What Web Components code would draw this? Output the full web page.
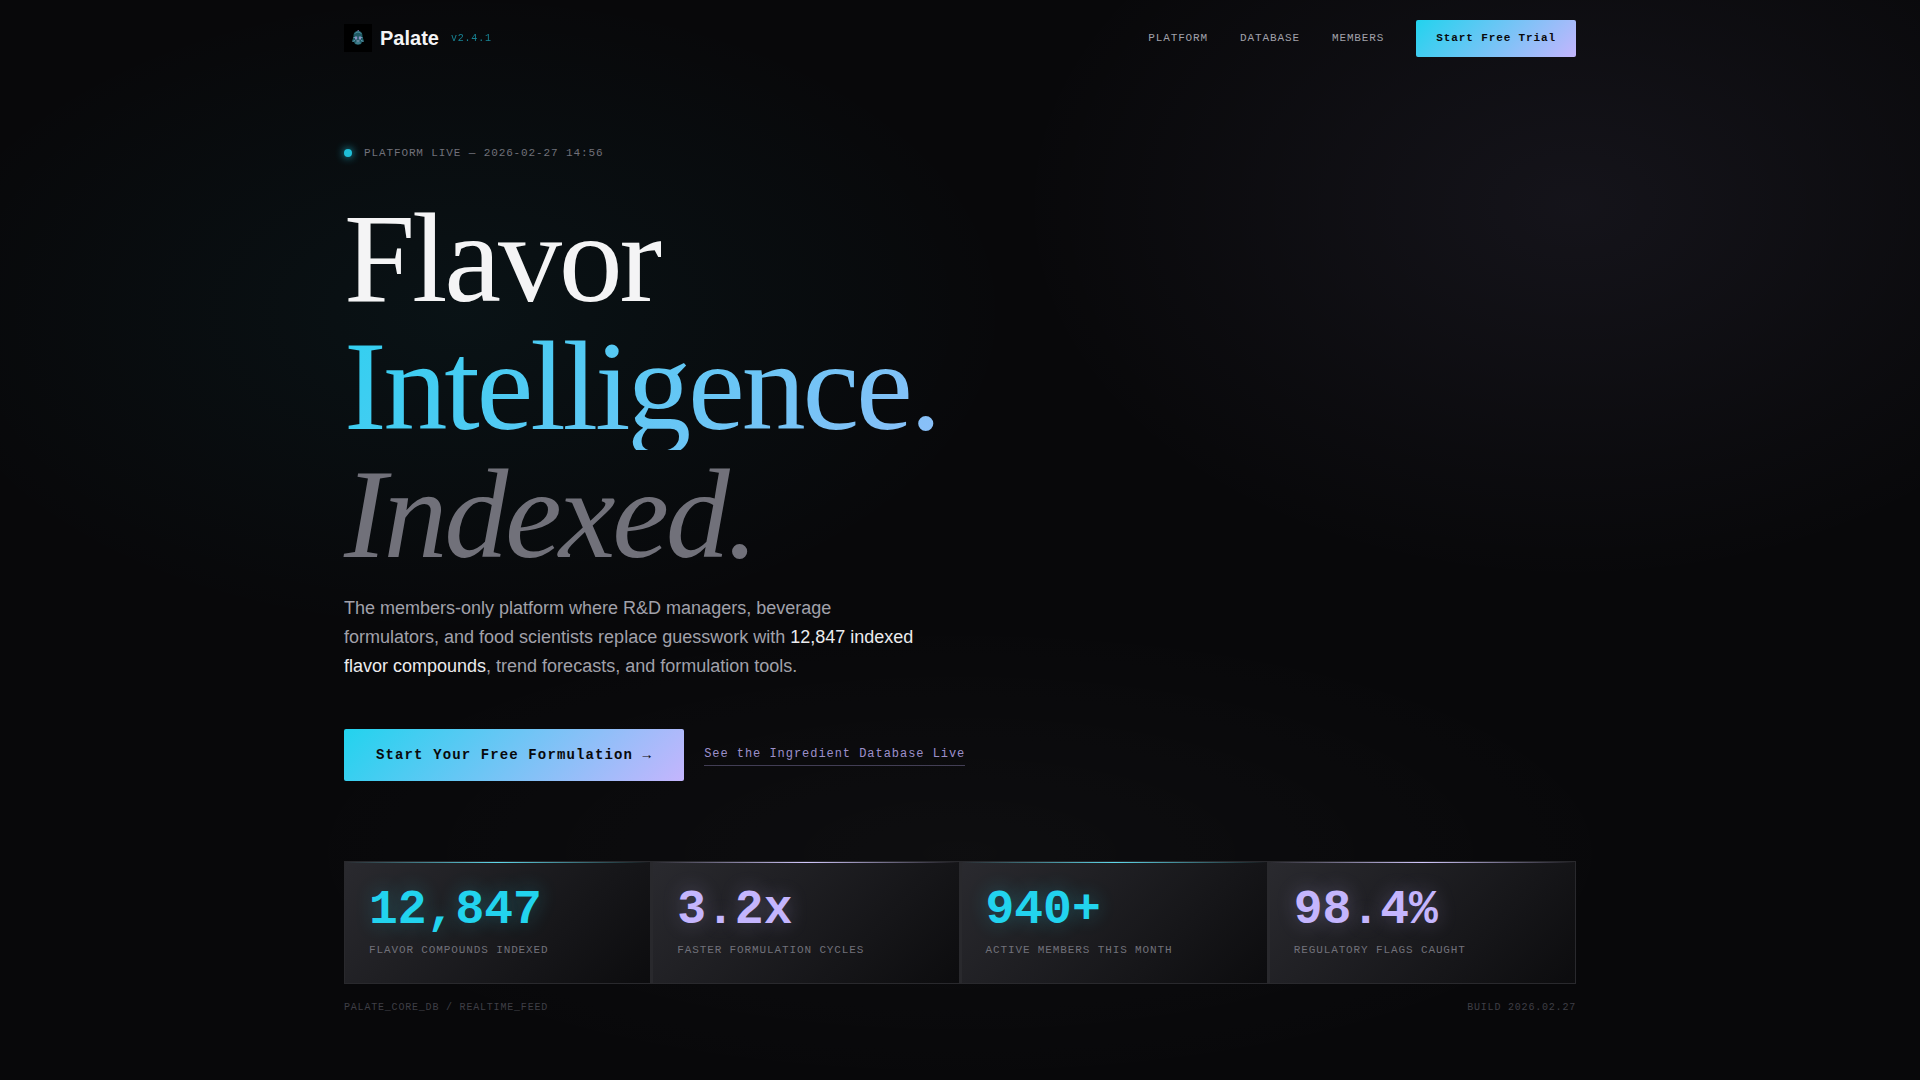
<!DOCTYPE html>
<html lang="en">
<head>
<meta charset="utf-8">
<title>Palate — Flavor Intelligence</title>
<style>
  :root {
    --cyan: #22d3ee;
    --violet: #c4b5fd;
    --ink: #09090b;
    --line: #29292d;
    --brand: linear-gradient(135deg, var(--cyan), var(--violet));
    --mono: "Liberation Mono", monospace;
    --sans: "Liberation Sans", sans-serif;
    --serif: "Liberation Serif", serif;
  }
  html { background: var(--ink); }
  body { margin: 0; color: #f4f4f5; font-family: var(--sans); }
</style>
</head>
<body>
<palate-page>
  <palate-header slot="header">
    <nav-link href="#platform">PLATFORM</nav-link>
    <nav-link href="#database">DATABASE</nav-link>
    <nav-link href="#members">MEMBERS</nav-link>
    <cta-button>Start Free Trial</cta-button>
  </palate-header>
  <palate-hero>
    <span slot="status">PLATFORM LIVE — 2026-02-27 14:56</span>
    <cta-button slot="actions" size="large">Start Your Free Formulation →</cta-button>
    <text-link slot="actions" href="#database">See the Ingredient Database Live</text-link>
  </palate-hero>
  <stat-grid>
    <stat-card value="12,847">FLAVOR COMPOUNDS INDEXED</stat-card>
    <stat-card value="3.2x" tone="violet">FASTER FORMULATION CYCLES</stat-card>
    <stat-card value="940+">ACTIVE MEMBERS THIS MONTH</stat-card>
    <stat-card value="98.4%" tone="violet">REGULATORY FLAGS CAUGHT</stat-card>
  </stat-grid>
  <build-line>
    <span>PALATE_CORE_DB / REALTIME_FEED</span>
    <span>BUILD 2026.02.27</span>
  </build-line>
</palate-page>

<script>
const define = (name, html, setup) => {
  const template = document.createElement("template");
  template.innerHTML = html;
  customElements.define(name, class extends HTMLElement {
    constructor() {
      super();
      this.attachShadow({ mode: "open" }).append(template.content.cloneNode(true));
    }
    connectedCallback() { if (setup) setup(this, this.shadowRoot); }
  });
};

define("palate-page", `
  <style>
    :host {
      display: block; min-height: 100vh; box-sizing: border-box;
      background:
        radial-gradient(ellipse 29% 30% at 24% 29%, rgba(34,211,238,.05), transparent),
        radial-gradient(ellipse 29% 35% at 82% 19%, rgba(196,181,253,.065), transparent),
        radial-gradient(ellipse 36% 22% at 50% 79%, rgba(255,255,255,.025), transparent),
        #08080a;
    }
    .wrap { max-width: 1232px; margin: 0 auto; padding: 0 24px; }
  </style>
  <div class="wrap"><slot name="header"></slot><main><slot></slot></main></div>
`);

define("palate-header", `
  <style>
    :host { display: block; padding: 20px 0; }
    header, .brand, nav { display: flex; align-items: center; }
    header { justify-content: space-between; }
    .brand { gap: 8px; padding-bottom: 1px; }
    nav { gap: 32px; }
    .name { font: 700 20px/28px var(--sans); }
    .version { margin-left: 4px; font: 10px/17px var(--mono); letter-spacing: .08em; color: var(--cyan); opacity: .6; }
  </style>
  <header>
    <div class="brand">
      <palate-logo></palate-logo><span class="name">Palate</span><span class="version">v2.4.1</span>
    </div>
    <nav aria-label="Main"><slot></slot></nav>
  </header>
`);

define("palate-logo", `
  <style>:host { display: block; } svg { display: block; }</style>
  <svg width="28" height="28" viewBox="0 0 28 28" aria-hidden="true">
    <rect width="28" height="28" fill="#000"/>
    <path d="M9.500 13c-.3-4 1.500-6 4.500-6s4.800 2 4.500 6l1.500 4-2 1-1 2-3 1-3-1-1-2-2-1z" fill="#1f5963"/>
    <path d="M11 9.500c1.500-2 4.500-2 6 0M9.500 13.500h2m5 0h2M8.500 17.500l2.500-1m8.500 1-2.500-1M11.500 19h5" fill="none" stroke="#5fa0b4"/>
    <path d="M11 12.500h2.200v3H11zM14.800 12.500H17v3h-2.200z" fill="#8b8fc4"/>
    <path d="M12.500 17h3" stroke="#a8b8dc"/>
    <path d="M13.500 6.500h1.500" stroke="#6b5f8c"/>
  </svg>
`);

define("nav-link", `
  <style>
    :host { display: block; }
    a { display: block; font: 11px/17px var(--mono); letter-spacing: .08em; color: #a1a1aa; text-decoration: none; }
  </style>
  <a><slot></slot></a>
`, (el, root) => { root.querySelector("a").href = el.getAttribute("href"); });

define("cta-button", `
  <style>
    :host { display: block; }
    button {
      display: block; margin: 0; border: 0; border-radius: 2px; padding: 10px 20px; cursor: pointer;
      background: var(--brand); color: var(--ink);
      font: 700 11px/17px var(--mono); letter-spacing: .08em; white-space: nowrap;
    }
    :host([size="large"]) button { padding: 16px 32px; font-size: 14px; line-height: 20px; }
  </style>
  <button type="button"><slot></slot></button>
`);

define("text-link", `
  <style>
    :host { display: block; }
    a {
      display: block; padding: 1px 0 3px; border-bottom: 1px solid rgba(196,181,253,.3);
      font: 12px/16px var(--mono); letter-spacing: .08em; color: rgba(196,181,253,.8); text-decoration: none;
    }
  </style>
  <a><slot></slot></a>
`, (el, root) => { root.querySelector("a").href = el.getAttribute("href"); });

define("palate-hero", `
  <style>
    :host { display: block; padding-top: 68px; }
    .status { display: flex; align-items: center; gap: 12px; font: 11px/16px var(--mono); letter-spacing: .08em; color: #71717a; }
    .dot { width: 8px; height: 8px; border-radius: 50%; background: var(--cyan); box-shadow: 0 0 8px var(--cyan); opacity: .9; }
    h1 { max-width: 1024px; margin: 33px 0 0; font: 400 128px/128px var(--serif); letter-spacing: -.025em; }
    h1 span, h1 em { display: block; }
    .grad { background: linear-gradient(135deg, #30d0f0, var(--violet)); background-clip: text; -webkit-background-clip: text; color: transparent; }
    h1 em { color: #71717a; }
    p { max-width: 576px; margin: 16px 0 0; font: 18px/29px var(--sans); color: #a1a1aa; }
    strong { font-weight: 400; color: #ececee; }
    .actions { display: flex; align-items: center; flex-wrap: wrap; gap: 20px; margin-top: 48px; }
  </style>
  <section>
    <div class="status"><i class="dot"></i><slot name="status"></slot></div>
    <h1><span>Flavor</span><span class="grad">Intelligence.</span><em>Indexed.</em></h1>
    <p>The members-only platform where R&amp;D managers, beverage formulators, and food scientists replace guesswork with <strong>12,847 indexed flavor compounds</strong>, trend forecasts, and formulation tools.</p>
    <div class="actions"><slot name="actions"></slot></div>
  </section>
`);

define("stat-grid", `
  <style>
    :host { display: grid; grid-template-columns: repeat(4, 1fr); gap: 1px; margin-top: 80px; background: var(--line); }
  </style>
  <slot></slot>
`);

define("stat-card", `
  <style>
    :host {
      --tone: var(--cyan); --shine: #5fd8ea; --glow: rgba(34,211,238,.3);
      display: block; position: relative; padding: 24px; border: 1px solid var(--line);
      background: linear-gradient(135deg, #2a2a2f, #0c0c0e) padding-box;
    }
    :host([tone="violet"]) { --tone: var(--violet); --shine: #d2c8fd; --glow: rgba(196,181,253,.3); }
    .line { position: absolute; inset: 0 0 auto; height: 1px; background: linear-gradient(90deg, transparent, var(--shine), transparent); }
    .value { font: 700 48px/48px var(--mono); color: var(--tone); text-shadow: 0 0 20px var(--glow); }
    .label { margin-top: 8px; font: 11px/17px var(--mono); letter-spacing: .08em; color: #71717a; }
  </style>
  <div class="line"></div>
  <div class="value"></div>
  <div class="label"><slot></slot></div>
`, (el, root) => { root.querySelector(".value").textContent = el.getAttribute("value"); });

define("build-line", `
  <style>
    :host {
      display: flex; justify-content: space-between; margin-top: 16px;
      font: 10px/15px var(--mono); letter-spacing: .08em; color: #3f3f46;
    }
  </style>
  <slot></slot>
`);
</script>
</body>
</html>
